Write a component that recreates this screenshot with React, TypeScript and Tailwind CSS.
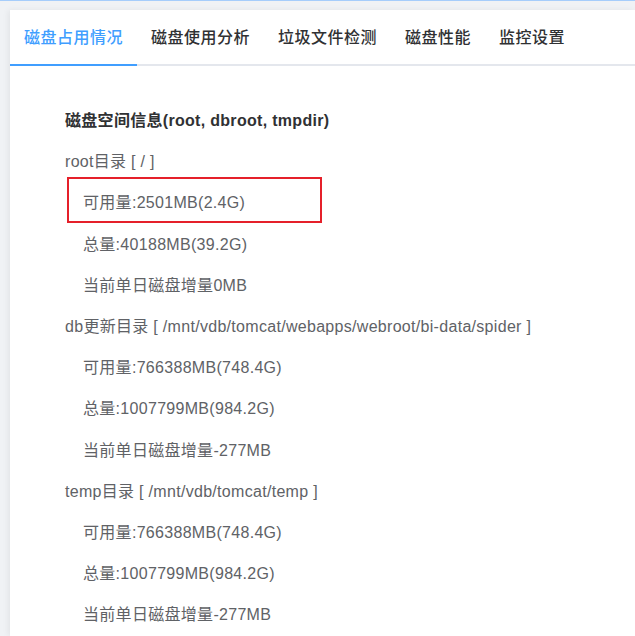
import React from "react";

const tabs = ["磁盘占用情况", "磁盘使用分析", "垃圾文件检测", "磁盘性能", "监控设置"];

type Row = { text: string; indent?: boolean; mark?: boolean };

const rows: Row[] = [
  { text: "root目录 [ / ]" },
  { text: "可用量:2501MB(2.4G)", indent: true, mark: true },
  { text: "总量:40188MB(39.2G)", indent: true },
  { text: "当前单日磁盘增量0MB", indent: true },
  { text: "db更新目录 [ /mnt/vdb/tomcat/webapps/webroot/bi-data/spider ]" },
  { text: "可用量:766388MB(748.4G)", indent: true },
  { text: "总量:1007799MB(984.2G)", indent: true },
  { text: "当前单日磁盘增量-277MB", indent: true },
  { text: "temp目录 [ /mnt/vdb/tomcat/temp ]" },
  { text: "可用量:766388MB(748.4G)", indent: true },
  { text: "总量:1007799MB(984.2G)", indent: true },
  { text: "当前单日磁盘增量-277MB", indent: true },
];

export default function App() {
  return (
    <div
      className="h-[636px] w-[635px] overflow-hidden bg-[#f0f2f5] border-t border-[#a6cdfb] pl-[10px] pt-[9px]"
      style={{ fontFamily: '"Liberation Sans", "Noto Sans CJK SC", sans-serif' }}
    >
      <div className="h-full bg-white shadow-[-2px_0_6px_rgba(0,0,0,0.06)]">
        {/* tabs */}
        <div className="flex h-[56px] border-b-2 border-[#e4e7ed]">
          {tabs.map((t, i) => (
            <div
              key={t}
              className={
                i === 0
                  ? "flex items-center px-[14px] pt-[1px] text-[16px] tracking-[0.5px] font-medium text-[#409eff] mb-[-2px] border-b-2 border-[#409eff]"
                  : "flex items-center px-[14px] pt-[1px] text-[16px] tracking-[0.5px] font-medium text-[#303133]"
              }
            >
              {t}
            </div>
          ))}
        </div>

        {/* content */}
        <div className="pl-[55px] pt-[34px] text-[16px] tracking-[0.3px] text-[#606266]">
          <div className="h-[41.2px] leading-[41px] font-bold text-[#303133]">
            磁盘空间信息(root, dbroot, tmpdir)
          </div>
          {rows.map((r, i) => (
            <div
              key={i}
              className={
                r.indent
                  ? "relative h-[41.2px] leading-[41px] pl-[18px]"
                  : "relative h-[41.2px] leading-[41px]"
              }
            >
              {r.text}
              {r.mark && (
                <div className="absolute left-[2px] top-[-5px] h-[46px] w-[255px] border-2 border-[#e5202a]" />
              )}
            </div>
          ))}
        </div>
      </div>
    </div>
  );
}
